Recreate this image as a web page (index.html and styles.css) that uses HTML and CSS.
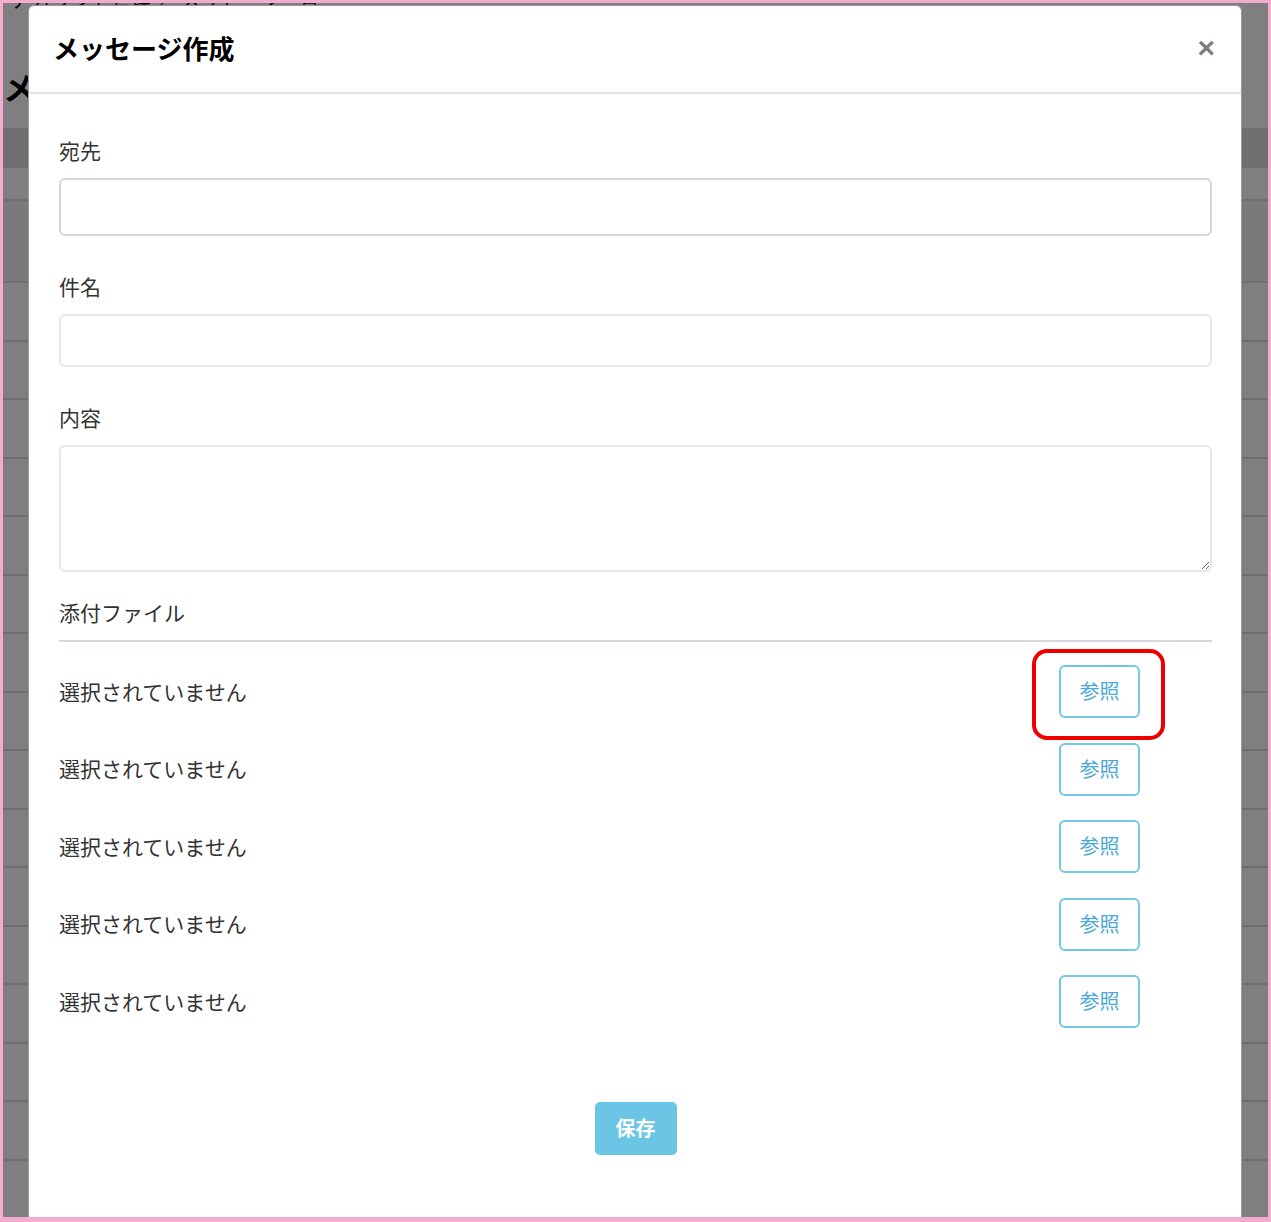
FILE: index.html
```html
<!DOCTYPE html>
<html lang="ja">
<head>
    <meta charset="UTF-8">
    <meta name="viewport" content="width=device-width, initial-scale=1.0">
    <title>メッセージ作成</title>
    <link rel="stylesheet" href="styles.css">
</head>
<body>

    <!-- 後ろの一覧画面 -->
    <div class="page">
        <div class="crumb">アカウント管理 ／ メッセージ一覧</div>
        <h1 class="page-title">メッセージ一覧</h1>
        <div class="toolbar"></div>
        <div class="list">
            <div class="list-row list-row-first"></div>
            <div class="list-row"></div>
            <div class="list-row"></div>
            <div class="list-row"></div>
            <div class="list-row"></div>
            <div class="list-row"></div>
            <div class="list-row"></div>
            <div class="list-row"></div>
            <div class="list-row"></div>
            <div class="list-row"></div>
            <div class="list-row"></div>
            <div class="list-row"></div>
            <div class="list-row"></div>
            <div class="list-row"></div>
            <div class="list-row"></div>
            <div class="list-row"></div>
        </div>
    </div>

    <div class="backdrop"></div>

    <!-- モーダル -->
    <div class="modal">
        <div class="modal-header">
            <h2 class="modal-title">メッセージ作成</h2>
            <button class="close" type="button">×</button>
        </div>

        <div class="modal-body">
            <div class="form-group">
                <label for="to">宛先</label>
                <input type="text" id="to" class="input input-to">
            </div>
            <div class="form-group">
                <label for="subject">件名</label>
                <input type="text" id="subject" class="input input-subject">
            </div>
            <div class="form-group form-group-last">
                <label for="body">内容</label>
                <textarea id="body" class="input input-body"></textarea>
            </div>

            <div class="attach-title">添付ファイル</div>
            <div class="file-list">
                <div class="file-row">
                    <span class="file-name">選択されていません</span>
                    <span class="browse-wrap">
                        <button type="button" class="btn-browse">参照</button>
                        <span class="mark"></span>
                    </span>
                </div>
                <div class="file-row">
                    <span class="file-name">選択されていません</span>
                    <span class="browse-wrap"><button type="button" class="btn-browse">参照</button></span>
                </div>
                <div class="file-row">
                    <span class="file-name">選択されていません</span>
                    <span class="browse-wrap"><button type="button" class="btn-browse">参照</button></span>
                </div>
                <div class="file-row">
                    <span class="file-name">選択されていません</span>
                    <span class="browse-wrap"><button type="button" class="btn-browse">参照</button></span>
                </div>
                <div class="file-row">
                    <span class="file-name">選択されていません</span>
                    <span class="browse-wrap"><button type="button" class="btn-browse">参照</button></span>
                </div>
            </div>

            <div class="modal-footer">
                <button type="button" class="btn-save">保存</button>
            </div>
        </div>
    </div>

    <!-- スクショの枠 -->
    <div class="frame"></div>

</body>
</html>
```

FILE: styles.css
```css
html, body {
    height: 100%;
    overflow: hidden;
}
body {
    margin: 0;
    font-family: "Noto Sans CJK JP", "Noto Sans", sans-serif;
    color: #333;
    background-color: #fff;
}

/* 後ろの画面 */
.page {
    padding: 0 3px;
}
.crumb {
    margin-top: -12px;
    height: 24px;
    font-size: 20px;
    line-height: 24px;
    padding-left: 8px;
    color: #111;
}
.page-title {
    margin: 52px 0 0;
    font-size: 32px;
    line-height: 44px;
    font-weight: bold;
    color: #000;
}
.toolbar {
    margin-top: 20px;
    height: 40px;
    background-color: #dcdedd;
}
.list {
    margin-top: 31px;
    border-top: 2px solid #dcdcdc;
}
.list-row {
    box-sizing: border-box;
    height: 58.5px;
    border-bottom: 2px solid #dcdcdc;
}
.list-row-first {
    height: 82px;
    background-color: #f4f4f6;
}

.backdrop {
    position: fixed;
    top: 0;
    left: 0;
    right: 0;
    bottom: 0;
    background-color: rgba(0, 0, 0, 0.5);
}

/* モーダル */
.modal {
    position: absolute;
    top: 5px;
    left: 28px;
    width: 1214px;
    box-sizing: border-box;
    border: 1px solid #9a9a9a;
    border-radius: 6px 6px 0 0;
    background-color: #fff;
}
.modal-header {
    height: 82px;
    display: flex;
    align-items: center;
    justify-content: space-between;
    padding: 0 26px 4px 24px;
    border-bottom: 2px solid #dde1e5;
}
.modal-title {
    margin: 0;
    font-size: 26px;
    font-weight: bold;
    color: #000;
}
.close {
    border: none;
    background: none;
    padding: 0;
    margin-top: 2px;
    font-family: "Liberation Sans", sans-serif;
    font-size: 30px;
    font-weight: bold;
    line-height: 1;
    color: #7c7c7c;
    cursor: pointer;
}
.modal-body {
    padding: 43px 29px 80px 30px;
}

.form-group {
    margin-bottom: 37px;
}
.form-group-last {
    margin-bottom: 27px;
}
.form-group label {
    display: block;
    font-size: 21px;
    line-height: 26px;
    margin-bottom: 15px;
}
.input {
    display: block;
    width: 100%;
    box-sizing: border-box;
    border: 2px solid #e6e7e9;
    border-radius: 6px;
    background-color: #fff;
    font-family: inherit;
    font-size: 20px;
    padding: 6px 12px;
    margin: 0;
}
.input-to {
    height: 58px;
    border-color: #d3d7dc;
}
.input-subject {
    height: 53px;
}
.input-body {
    height: 127px;
    resize: vertical;
}

/* 添付ファイル */
.attach-title {
    font-size: 21px;
    line-height: 26px;
    padding-bottom: 15px;
    border-bottom: 2px solid #d6d9dc;
}
.file-list {
    margin-top: 11px;
}
.file-row {
    height: 77.5px;
    display: flex;
    align-items: center;
    justify-content: space-between;
    padding-right: 72px;
    font-size: 21px;
}
.file-name {
    margin-top: -2px;
}
.browse-wrap {
    position: relative;
    display: flex;
}
.btn-browse {
    width: 81px;
    height: 53px;
    box-sizing: border-box;
    border: 2px solid #72c8e7;
    border-radius: 6px;
    background-color: #fff;
    color: #4aa8d6;
    font-family: inherit;
    font-size: 20px;
    padding-bottom: 3px;
    cursor: pointer;
}
/* 赤い囲み */
.mark {
    position: absolute;
    top: -16px;
    left: -27px;
    width: 133px;
    height: 91px;
    box-sizing: border-box;
    border: 4px solid #ee0000;
    border-radius: 15px;
}

.modal-footer {
    margin-top: 61px;
    display: flex;
    justify-content: center;
}
.btn-save {
    width: 82px;
    height: 53px;
    border: none;
    border-radius: 5px;
    background-color: #6bc5e5;
    color: #fff;
    font-family: inherit;
    font-size: 20px;
    font-weight: bold;
    padding-bottom: 3px;
    cursor: pointer;
}

.frame {
    position: fixed;
    top: 0;
    left: 0;
    right: 0;
    bottom: 0;
    border: 3px solid #f4abd0;
    border-bottom-width: 5px;
    pointer-events: none;
}
```
